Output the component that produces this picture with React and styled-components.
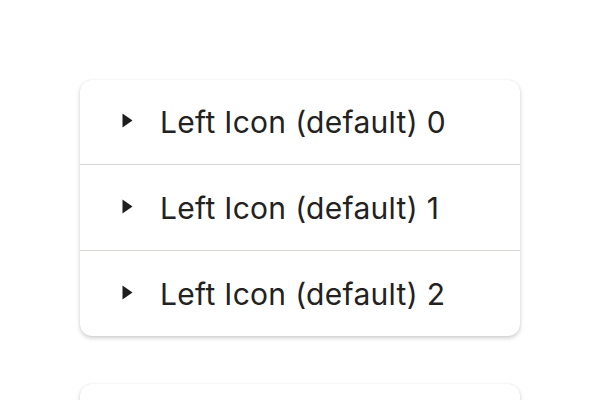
import React from "react";
import styled, { createGlobalStyle } from "styled-components";

const GlobalStyle = createGlobalStyle`
    body {
        margin: 0;
        background: #ffffff;
        font-family: Inter, "Open Sans", "Liberation Sans", sans-serif;
    }
`;

const Page = styled.div`
    display: flex;
    flex-direction: column;
    gap: 48px;
    padding: 80px 80px 0 80px;
    height: 400px;
    box-sizing: border-box;
    overflow: hidden;
`;

const Card = styled.div`
    width: 440px;
    background: #ffffff;
    border-radius: 12px;
    box-shadow: 0 2px 4px rgba(0, 0, 0, 0.2), 0 0 1px rgba(0, 0, 0, 0.1);
    flex-shrink: 0;
`;

const Row = styled.div`
    display: flex;
    align-items: center;
    height: ${(p) => (p.first ? "84px" : "85px")};
    padding-left: 42px;
    gap: 27px;
    border-top: ${(p) => (p.first ? "none" : "1px solid #d8d5d3")};
    color: #222222;
    font-size: 30px;
    letter-spacing: 0.3px;
    cursor: pointer;
`;

const Caret = styled.svg`
    width: 11px;
    height: 15px;
    flex-shrink: 0;
    margin-top: -3px;
`;

const Label = styled.span`
    line-height: 1;
`;

function CaretRight() {
    return (
        <Caret viewBox="0 0 11 15">
            <path d="M0.5 0.5 L10.5 7.5 L0.5 14.5 Z" fill="#1e1e1e" />
        </Caret>
    );
}

export default function App() {
    const items = [0, 1, 2];
    return (
        <>
            <GlobalStyle />
            <Page>
                <Card>
                    {items.map((i) => (
                        <Row key={i} first={i === 0}>
                            <CaretRight />
                            <Label>Left Icon (default) {i}</Label>
                        </Row>
                    ))}
                </Card>
                <Card>
                    {items.map((i) => (
                        <Row key={i} first={i === 0}>
                            <CaretRight />
                            <Label>Left Icon (default) {i}</Label>
                        </Row>
                    ))}
                </Card>
            </Page>
        </>
    );
}
